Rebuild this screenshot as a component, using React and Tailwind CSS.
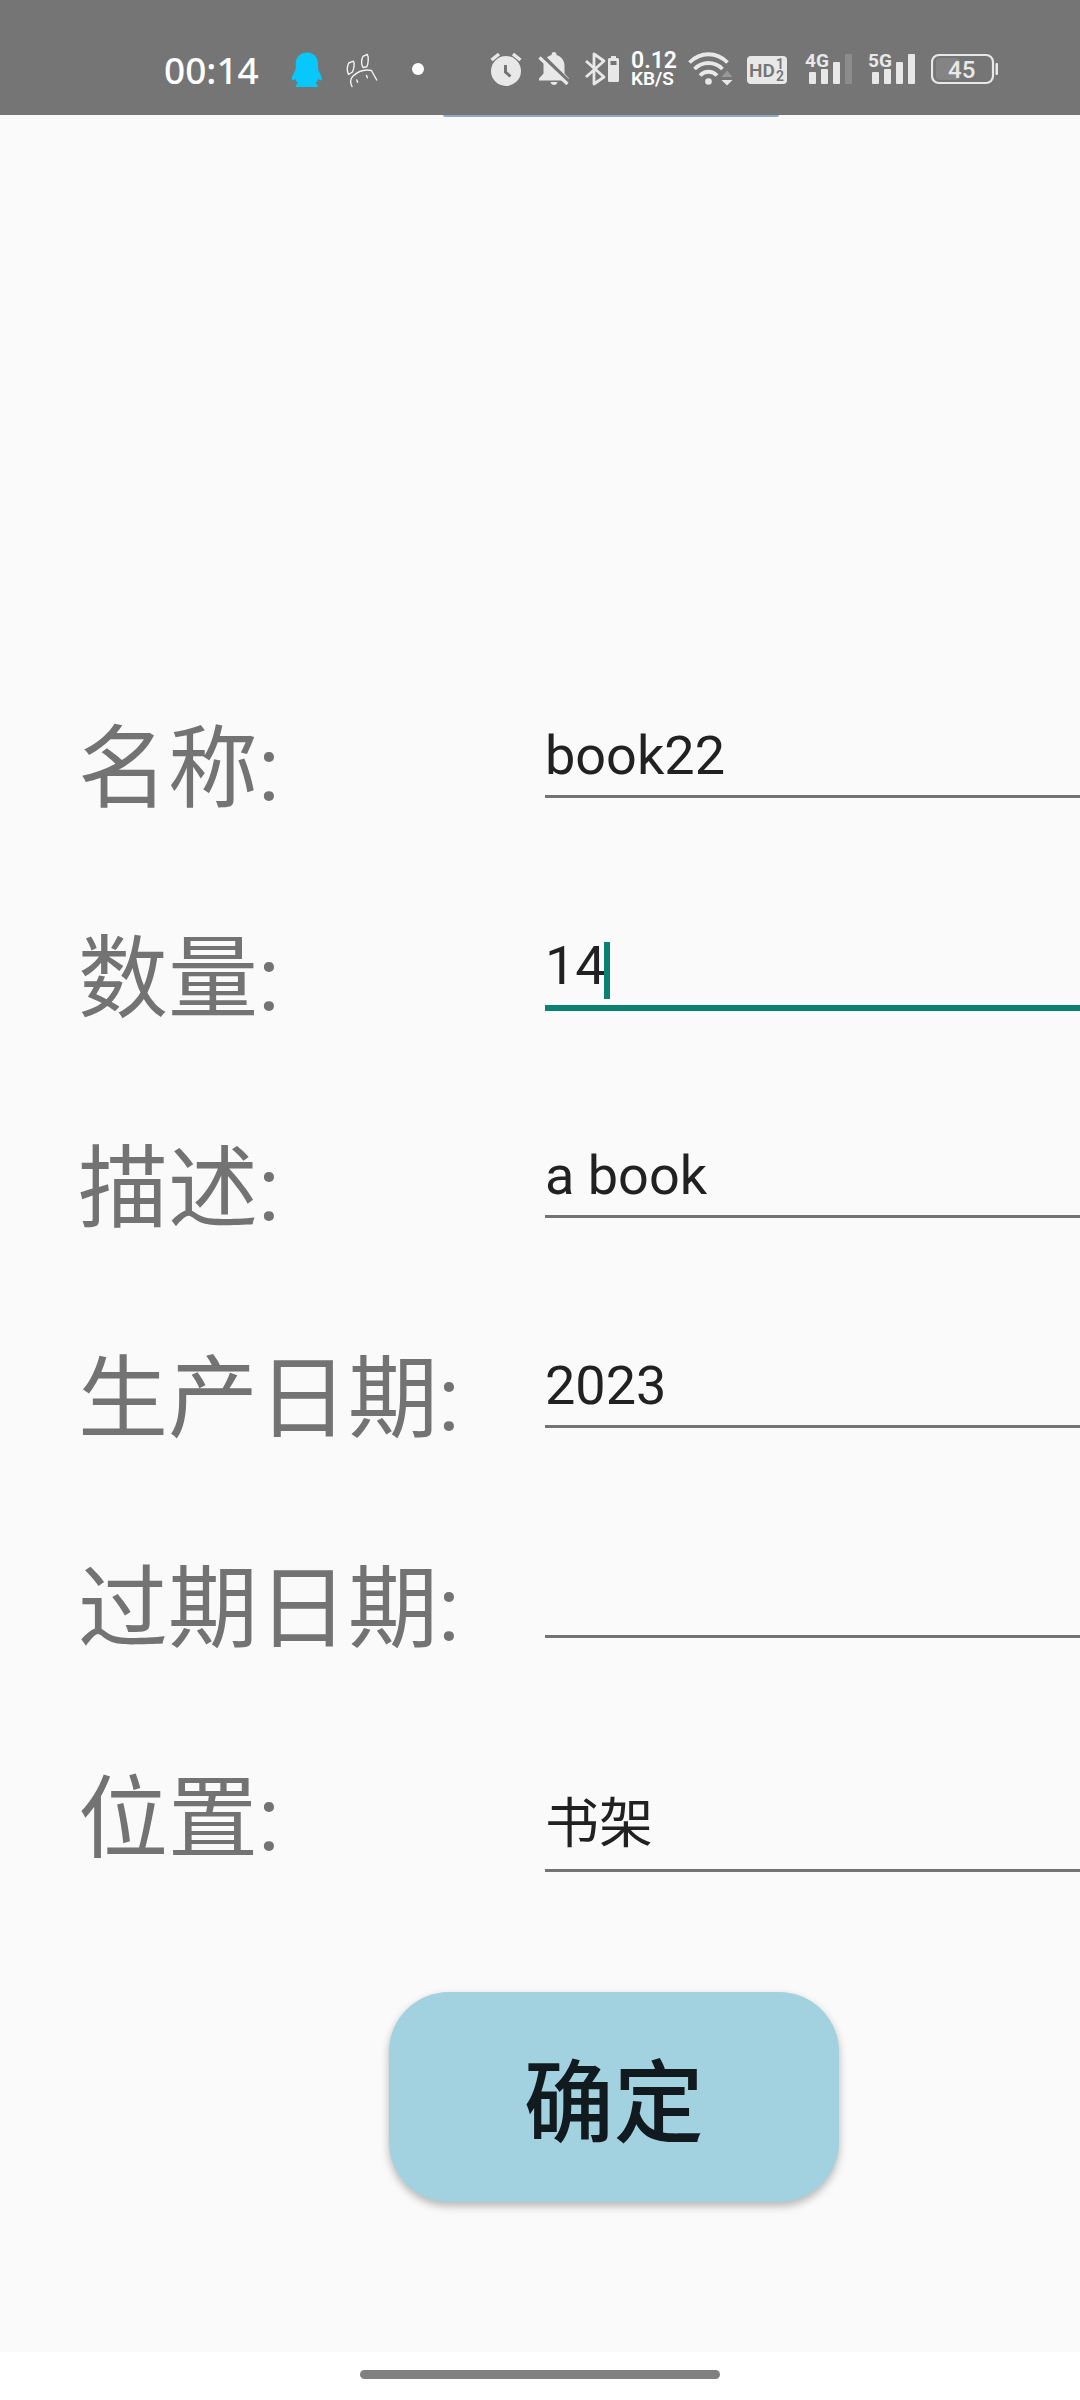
import React from 'react';

const fields = [
  { id: 'name', label: '名称:', value: 'book22' },
  { id: 'count', label: '数量:', value: '14', active: true },
  { id: 'description', label: '描述:', value: 'a book' },
  { id: 'produced', label: '生产日期:', value: '2023' },
  { id: 'expires', label: '过期日期:', value: '' },
  { id: 'place', label: '位置:', value: '书架', tall: true },
];

function StatusBar() {
  return (
    <header className="flex h-[115px] items-start justify-between bg-[#757575] pt-[51px] pr-[82px] pl-[164px] text-white">
      <div className="flex h-9 items-center">
        <time className="w-[127px] pt-0.5 font-['Noto_Sans','Open_Sans',sans-serif] text-[37px] leading-9 font-medium">00:14</time>
        <svg viewBox="291 51 32 36" className="h-9 w-8" fill="#08c7fb" aria-label="QQ">
          <path d="M307 52.500c-7 0-11.300 5-11.300 11.500v4c0 3-3.400 6.500-3.700 10.500-.1 2.500 1.200 2.500 3.300.2.500 1.800 1.400 3.300 2.700 4.500-1.700.8-2.500 1.800-2 3.800h21.500c.6-2-.3-3-2-3.800 1.400-1.300 2.200-2.700 2.700-4.500 2.200 2.300 3.600 2.300 3.500-.2-.3-4-3.700-7.500-3.700-10.500v-4c0-6.500-4-11.500-11-11.500z" />
        </svg>
        <svg viewBox="343 51 36 36" className="ml-5 h-9 w-9 overflow-visible" fill="none" stroke="#f2f2f2" strokeWidth="1.400" strokeLinecap="round" strokeLinejoin="round" aria-hidden="true">
          <path d="M348.500 74.500c-1.500-3.500-1.500-8 .2-11.500l4.800-1.800c1.200 1.800.6 7.300-1 10.800zM363 67.500c-1.700-3.500-1.700-8 0-11.200l4.200-2c1.700 2.500 1.200 9-.4 12.500zM352 86.500c-2-4-1.800-7.500.8-10.300 5.500-5.200 12.500-7.200 18.700-5.700l5.200 9.500M356.800 80l.8 2.200M366.500 75.500l.9 2.300" />
        </svg>
        <span className="ml-[33px] size-3 rounded-full bg-white" />
      </div>
      <div className="flex h-9 items-center gap-2.5">
        <svg viewBox="490 51 38 36" className="h-9 w-[38px]" aria-label="闹钟">
          <circle cx="506" cy="71" r="15" fill="#e8e8e8" />
          <path d="M491.500 60l7.500-6M520.500 60l-7.500-6" stroke="#e8e8e8" strokeWidth="3.500" />
          <path d="M505.500 65v7l5 4.500" stroke="#757575" strokeWidth="3" fill="none" />
        </svg>
        <svg viewBox="538 51 36 36" className="h-9 w-9" aria-label="静音">
          <path d="M551.500 55c0-1.700 1-3 2.500-3s2.500 1.300 2.500 3c5 1.500 8 5.500 8 10.500v8l4.500 5v2h-30v-2l4.500-5v-8c0-5 3-9 8-10.500zM550.500 82h7c-.5 2-1.700 3-3.500 3s-3-1-3.500-3z" fill="#e8e8e8" />
          <path d="M542 55.500l28 27.500" stroke="#757575" strokeWidth="4" />
          <path d="M539.500 57.500l28 26.500" stroke="#e8e8e8" strokeWidth="3.200" />
        </svg>
        <svg viewBox="584 51 37 36" className="h-9 w-[37px]" aria-label="蓝牙">
          <path d="M586 61l18 16-10 7V54l10 7-18 16" fill="none" stroke="#e8e8e8" strokeWidth="2.800" strokeLinejoin="round" />
          <path d="M611 56h5v2h1.500q1.500 0 1.500 1.500v21q0 1.500-1.500 1.500h-8q-1.500 0-1.500-1.500v-21q0-1.500 1.500-1.500h1.500zM610.500 61v4h6v-4z" fill="#e8e8e8" fillRule="evenodd" />
        </svg>
        <div className="w-[47px] font-[Roboto,sans-serif] font-semibold">
          <div className="text-[23px] leading-[19px]">0.12</div>
          <div className="text-[19px] leading-[17px]">KB/S</div>
        </div>
        <svg viewBox="688 51 49 36" className="h-9 w-[49px]" fill="none" stroke="#e8e8e8" strokeWidth="3.800" aria-label="无线网络">
          <path d="M689.500 62.500c11-11 27-11 38 0M694.500 69c8-8 20-8 28 0M700 75.500c5-5 12-5 17 0" />
          <circle cx="708.500" cy="81.500" r="3.300" fill="#e8e8e8" stroke="none" />
          <path d="M721.500 77l5.500-6.500 5.500 6.500z" fill="#999" stroke="none" />
          <path d="M721.500 80l5.500 5.500 5.500-5.500z" fill="#e8e8e8" stroke="none" />
        </svg>
        <svg viewBox="747 51 49 36" className="h-9 w-[49px] font-[Roboto,sans-serif] font-semibold" fill="#757575" aria-label="HD">
          <rect x="747" y="56" width="40" height="28" rx="4" fill="#e8e8e8" />
          <text x="749" y="77" fontSize="19">HD</text>
          <text x="776" y="69" fontSize="14">1</text>
          <text x="776" y="81" fontSize="14">2</text>
        </svg>
        <svg viewBox="806 51 52 36" className="h-9 w-[52px] overflow-visible font-[Roboto,sans-serif] font-bold" fill="#e8e8e8" aria-label="4G">
          <text x="805" y="67" fontSize="19">4G</text>
          <rect x="809" y="72" width="7" height="12" rx="1" />
          <rect x="821" y="69" width="7" height="15" rx="1" />
          <rect x="833" y="62" width="7" height="22" rx="1" />
          <rect x="845" y="54" width="7" height="30" rx="1" fill="#8c8c8c" />
        </svg>
        <svg viewBox="868 51 53 36" className="h-9 w-[53px] overflow-visible font-[Roboto,sans-serif] font-bold" fill="#e8e8e8" aria-label="5G">
          <text x="868" y="67" fontSize="19">5G</text>
          <rect x="872" y="72" width="7" height="12" rx="1" />
          <rect x="884" y="69" width="7" height="15" rx="1" />
          <rect x="896" y="62" width="7" height="22" rx="1" />
          <rect x="908" y="54" width="7" height="30" rx="1" />
        </svg>
        <svg viewBox="931 51 67 36" className="h-9 w-[67px] font-[Roboto,sans-serif] font-medium" aria-label="电量">
          <rect x="936" y="58" width="24" height="22" rx="4" fill="#848484" />
          <rect x="932" y="55" width="61" height="28" rx="7" fill="none" stroke="#e8e8e8" strokeWidth="2.200" />
          <rect x="995.500" y="63" width="2.500" height="12" rx="1" fill="#e8e8e8" />
          <text x="948" y="78" fontSize="24" fill="#e8e8e8">45</text>
        </svg>
      </div>
    </header>
  );
}

function Field({ id, label, value, active, tall }) {
  const size = active
    ? 'h-24 border-b-[6px] border-[#0b8174] pt-2.5'
    : tall
      ? 'h-[117px] border-b-[3px] border-[#737373] pt-3.5'
      : 'h-[93px] border-b-[3px] border-[#737373] pt-2.5';
  return (
    <div className="flex h-[210px] items-start pl-[78px]">
      <label htmlFor={id} className="w-[467px] shrink-0 text-[90px] leading-[130px] text-[#737373]">
        {label}
      </label>
      <div className="relative min-w-0 flex-1">
        <input id={id} defaultValue={value} className={`block w-full rounded-none bg-transparent text-[54px] text-[#212121] outline-none ${size}`} />
        {active && <span className="absolute top-[27px] left-[59px] h-[57px] w-1.5 bg-[#0b8174]" />}
      </div>
    </div>
  );
}

export default function App() {
  return (
    <div className="flex min-h-screen flex-col overflow-hidden bg-[#fafafa] font-[Roboto,'Noto_Sans_CJK_SC',sans-serif]">
      <StatusBar />
      <div className="ml-[41%] h-0.5 w-[336px] rounded-b-full bg-[#93a9c0]" />
      <form className="flex-1 pt-[588px]" onSubmit={(e) => e.preventDefault()}>
        {fields.map((field) => (
          <Field key={field.id} {...field} />
        ))}
        <button type="submit" className="mt-[27px] ml-[36%] block h-[210px] w-[450px] rounded-[60px] bg-[#a2d1e0] pt-4 text-[90px] leading-none font-medium text-[#111a1f] shadow-[0_4px_8px_rgba(0,0,0,0.28)]">
          确定
        </button>
      </form>
      <footer className="flex h-12 items-start justify-center bg-white pt-[18px]">
        <div className="h-[9px] w-[360px] rounded-full bg-[#808080]" />
      </footer>
    </div>
  );
}
